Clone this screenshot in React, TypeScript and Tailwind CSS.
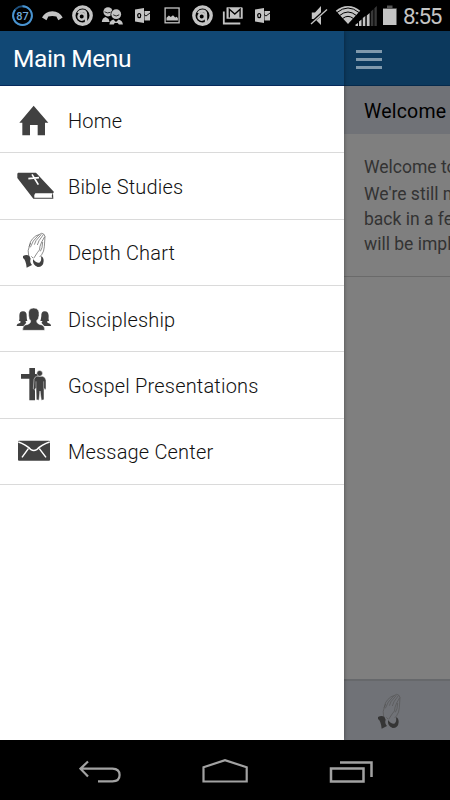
import type { ReactNode } from "react";

function StatusSlot({ children }: { children: ReactNode }) {
  return (
    <svg className="w-[30px] h-[31px] shrink-0" viewBox="0 0 30 31" fill="#c4c4c4">
      {children}
    </svg>
  );
}

function AvastGlyph() {
  return (
    <StatusSlot>
      <circle cx="15.5" cy="15.6" r="8.7" fill="none" stroke="#c4c4c4" strokeWidth="3.4" />
      <path d="M11.2 13.2Q12.500 10.700 15.500 10.700Q19 10.800 19 14.500V22" fill="none" stroke="#c4c4c4" strokeWidth="2.400" />
      <circle cx="14.700" cy="16.500" r="3.200" fill="none" stroke="#c4c4c4" strokeWidth="2.400" />
    </StatusSlot>
  );
}

function OutlookGlyph() {
  return (
    <StatusSlot>
      <path d="M8 9.6l9-1.6v15l-9-1.6z" />
      <ellipse cx="12.2" cy="15.6" rx="1.5" ry="2.1" fill="none" stroke="#000" strokeWidth="1.2" />
      <path d="M17.5 11H23v9.5h-5.5z" />
      <path d="M17 14.500l2 1.500L23 13" fill="none" stroke="#000" strokeWidth="0.9" />
    </StatusSlot>
  );
}

function StatusBar() {
  return (
    <div className="h-[31px] shrink-0 bg-black flex items-center pl-[7px]">
      <StatusSlot>
        <circle cx="15.5" cy="15.6" r="9.4" fill="none" stroke="#1d4f7c" strokeWidth="1.9" />
        <path d="M15.5 6.2a9.4 9.4 0 1 1-7.4 3.6" fill="none" stroke="#4a94d0" strokeWidth="1.9" />
        <text x="15.5" y="19.6" textAnchor="middle" fill="#6fa9d8" className="font-['Roboto',sans-serif] text-[11px] font-medium">
          87
        </text>
      </StatusSlot>
      <StatusSlot>
        <path d="M5 17.6Q8 11.4 15.3 11.2Q22.800 11.4 25.700 17.600L21.300 20.200L19.400 16.600Q15.300 15.300 11.300 16.600L9.500 20.200Z" />
      </StatusSlot>
      <AvastGlyph />
      <StatusSlot>
        <circle cx="11" cy="11.8" r="4.6" />
        <path d="M7.500 11.800q3 2 6 .500" stroke="#000" strokeWidth=".8" fill="none" />
        <path d="M4.800 22q.2-4 3.800-5l3 2l1 3z" />
        <circle cx="19.200" cy="14.300" r="5.600" fill="#000" />
        <circle cx="19.200" cy="14.200" r="4.900" />
        <path d="M16.200 14.800q3 2.400 6 0" stroke="#000" strokeWidth=".8" fill="none" />
        <path d="M12.400 24.600q.2-3.800 4-5l2.600 2.500l2.600-2.500q4 1.200 4.300 5h-4l-1.200-1.500h-3l-1 1.500z" />
      </StatusSlot>
      <OutlookGlyph />
      <StatusSlot>
        <rect x="8.100" y="8" width="14" height="14.800" fill="none" stroke="#c4c4c4" strokeWidth="1.300" />
        <path d="M9.500 20.500v-2.700l2.400-2.200l1.800 1.400l2.300-1.800l2.200 2.300l1.500-.8l1.200 1.600v2.200z" />
      </StatusSlot>
      <AvastGlyph />
      <StatusSlot>
        <path d="M10 7.200h14.500q1.200 0 1.200 1.200v10.400H9.500V7.700z" />
        <path d="M12.300 17.600V9.300l5.500 4.800l5.300-4.800v8.300" fill="none" stroke="#000" strokeWidth="1.300" />
        <path d="M6.800 11.500v12h16.500" fill="none" stroke="#c4c4c4" strokeWidth="1.800" />
      </StatusSlot>
      <OutlookGlyph />
      <svg className="w-[130px] h-[31px] shrink-0" viewBox="277 0 130 31" fill="#c4c4c4">
        {/* muted speaker */}
        <path d="M311.800 12.500h3.200l6-6.500v19l-6-6h-3.200z" />
        <path d="M310.800 23.500L326.800 9" stroke="#000" strokeWidth="3" />
        <path d="M311 24L327 9.500" stroke="#c4c4c4" strokeWidth="1.300" />
        {/* wifi */}
        <path d="M348 24L335.800 10.700Q341 6 348 6t12.200 4.700z" />
        <g fill="none" stroke="#000" strokeWidth="1">
          <path d="M337 12.500q11-9 22 0" />
          <path d="M339.600 15.500q8.400-7 16.800 0" />
          <path d="M342.500 18.600q5.500-4.500 11 0" />
        </g>
        {/* signal */}
        <path d="M355.500 26v-1.500l2.500-1.500v3zM359 26v-4.500l2.500-2v6.500zM362.800 26v-8l2.500-2v10zM366.800 26V15.500l2.800-2.500v13z" />
        <path d="M370.800 26V11.500l2.600-2.200V26zM374.400 26V8.200l2.400-2.200v20z" fill="#383838" />
        {/* battery */}
        <path d="M383 8.500h13.500V25H383z" />
        <path d="M383 8h4V5.500h5.500V8h4v1H383z" fill="#555" />
      </svg>
      <span className="text-[#c4c4c4] text-[22.5px] leading-[31px] tracking-[-1.3px] pt-[1px] -ml-[4px] whitespace-nowrap">8:55</span>
    </div>
  );
}

function HomeIcon() {
  return <path d="M59 17L103 68H93V106H71V75H48V106H25V68H16Z" />;
}

function BibleIcon() {
  return (
    <>
      <path d="M12 20H66L120 78L117 82L118 98H58L10 36V23Z" />
      <path d="M64 82H116L113 90L115 95H61Q58 88 64 82Z" fill="#fff" />
      <path d="M54 25L73 56M43 38L75 35" stroke="#fff" strokeWidth="5" />
    </>
  );
}

function PrayingHands() {
  return (
    <>
      <g fill="none" stroke="#555" strokeWidth="2">
        <path d="M44 71Q40 55 46 43Q48 27 56 20Q66 9 75 8Q83 1 89 6L93 13L91 44Q90 59 83 68L77 75" />
        <path d="M45 44L50 33M75 8L58 27L49 46" />
        <path d="M82 7L66 26L61 38M88 8L75 26L70 39M92 14L83 30L78 43" />
        <path d="M78 43Q79 55 70 62L59 79M52 73L57 78M86 30L84 47L79 58" />
      </g>
      <path d="M27 72Q37 66 46 71L50 80Q46 90 54 99L38 107Q36 84 27 78Z" />
      <path d="M57 81Q55 100 71 105Q88 105 89 87Q89 75 81 73Q84 87 76 92Q65 93 57 81Z" />
    </>
  );
}

function GroupIcon() {
  return (
    <>
      <path d="M8 81Q8 74 18 72Q21 70 19 66H15Q17 59 16 50Q16 37 27 37Q39 37 38 51Q38 60 40 66H35Q34 69 37 71L28 81Z" />
      <path d="M111 81Q111 74 102 72Q98 70 100 66H105Q103 59 104 50Q103 37 92 37Q81 37 82 51Q81 60 79 66H85Q86 69 82 71L91 81Z" />
      <path d="M26 94Q25 82 34 78Q51 75 50 65Q44 60 44 50Q40 28 59 27Q78 28 75 50Q74 60 68 65Q67 75 84 78Q93 82 92 94Z" stroke="#fff" strokeWidth="1.500" />
    </>
  );
}

function CrossIcon() {
  return (
    <>
      <path d="M46 9H63V27H76V41H63V106H46V41H21V27H46Z" />
      <g stroke="#fff" strokeWidth="1.5">
        <path d="M68 34H86Q94 36 96 45V72Q92 77 90 70V104L82 106L78 78L75 106L67 104L66 70Q61 78 58 71L60 43Q62 35 68 34Z" />
        <circle cx="77" cy="25" r="8.500" />
      </g>
      <path d="M66 49V71M89 49V70" stroke="#fff" strokeWidth="1.300" />
    </>
  );
}

function MailIcon() {
  return (
    <>
      <rect x="12" y="29" width="96" height="60" rx="3" />
      <path d="M13 33Q35 40 51 56Q59 61 68 56Q84 40 107 33M24 79L43 53M96 79L76 53" fill="none" stroke="#fff" strokeWidth="4.500" />
    </>
  );
}

const menuItems = [
  { label: "Home", Icon: HomeIcon },
  { label: "Bible Studies", Icon: BibleIcon },
  { label: "Depth Chart", Icon: PrayingHands },
  { label: "Discipleship", Icon: GroupIcon },
  { label: "Gospel Presentations", Icon: CrossIcon },
  { label: "Message Center", Icon: MailIcon },
];

function Drawer() {
  return (
    <aside className="relative z-10 w-[344px] shrink-0 flex flex-col bg-white shadow-[0_0_4px_rgba(0,0,0,0.4)]">
      <header className="h-[55px] bg-[#114875] border-b border-[#062a5c] px-[13px] pt-[3px] flex items-center">
        <h1 className="text-white text-[24.5px] tracking-[-0.4px] leading-none">Main Menu</h1>
      </header>
      <ul className="pt-[1.2px]">
        {menuItems.map(({ label, Icon }) => (
          <li key={label} className="h-[66.3px] border-b border-[#dadada] flex items-center pl-[14px] gap-[14px]">
            <svg className="size-10 overflow-visible" viewBox="0 0 120 120" fill="#414141">
              <Icon />
            </svg>
            <span className="text-[#111] text-[20px] font-light tracking-[0.18px] pt-[2px]">{label}</span>
          </li>
        ))}
      </ul>
    </aside>
  );
}

function PageBehind() {
  return (
    <main className="flex-1 min-w-0 flex flex-col bg-[#7f7f7f] overflow-hidden whitespace-nowrap">
      <header className="h-[55px] shrink-0 bg-[#0c395d] border-b border-[#062a4c] pl-3 pt-[19px] flex flex-col gap-[5px]">
        <div className="w-[26px] h-[3px] bg-[#8099ac]" />
        <div className="w-[26px] h-[3px] bg-[#8099ac]" />
        <div className="w-[26px] h-[3px] bg-[#8099ac]" />
      </header>
      <h2 className="h-12 shrink-0 bg-[#707277] pl-5 pt-[3px] flex items-center text-black text-[19.500px] tracking-[0.2px]">Welcome</h2>
      <div className="h-[143px] shrink-0 border-b border-[#6a6a6a] pl-5 pt-[21px] text-[#333] text-[17.5px] leading-[25px]">
        <p className="mb-[2px]">Welcome to</p>
        <p>We're still m</p>
        <p>back in a few</p>
        <p>will be impl</p>
      </div>
      <footer className="mt-auto h-[61px] shrink-0 bg-[#707277] border-t-2 border-[#66686b] pl-[25px] pt-[12px]">
        <svg className="size-10" viewBox="0 0 120 120" fill="#353535">
          <PrayingHands />
        </svg>
      </footer>
    </main>
  );
}

function NavBar() {
  return (
    <nav className="h-[60px] shrink-0 bg-black flex items-center justify-center gap-[81px] pl-[2px]">
      <svg className="w-[42px] h-[60px]" viewBox="79 740 42 60" fill="none" stroke="#a2a2a2" strokeWidth="2.200">
        <path d="M88 761.500L80.500 768.700L88 776.500M80.500 768.700H112.500Q119.600 769 119.600 775Q119.600 781.300 112.500 781.300H98" />
      </svg>
      <svg className="w-[46px] h-[60px]" viewBox="202 740 46 60" fill="none" stroke="#a2a2a2" strokeWidth="2.200">
        <path d="M203.500 781.500V767.300L225 760.200L246.700 767.300V781.500Z" />
      </svg>
      <svg className="w-[44px] h-[60px]" viewBox="329 740 44 60" fill="none" stroke="#a2a2a2" strokeWidth="2.500">
        <path d="M331 768.500H363.500V781.500H331ZM340 762.500H371.500V777" />
      </svg>
    </nav>
  );
}

export default function App() {
  return (
    <div className="w-[450px] h-[800px] flex flex-col overflow-hidden bg-black font-['Roboto',sans-serif]">
      <StatusBar />
      <div className="flex-1 min-h-0 flex overflow-hidden">
        <Drawer />
        <PageBehind />
      </div>
      <NavBar />
    </div>
  );
}
